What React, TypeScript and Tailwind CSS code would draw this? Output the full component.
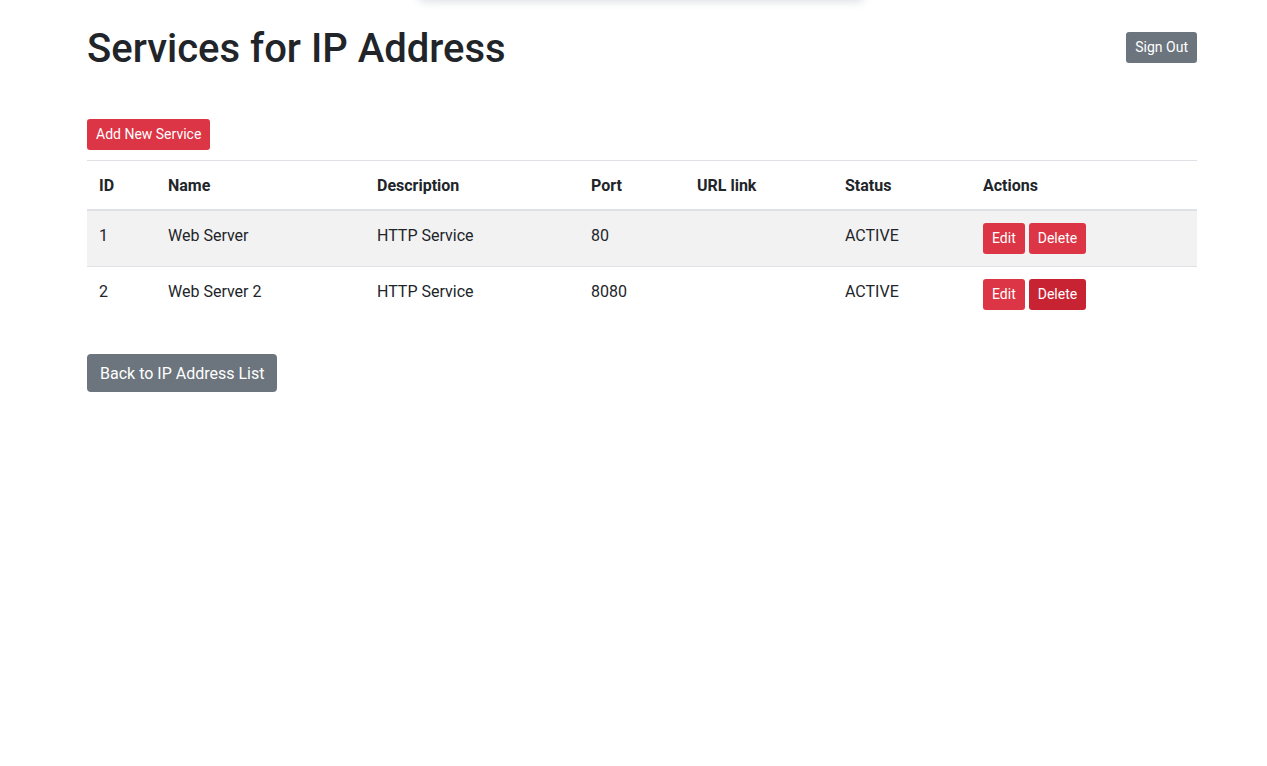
import React from 'react';

const SERVICES = [
  { id: 1, name: 'Web Server', description: 'HTTP Service', port: '80', url: '', status: 'ACTIVE' },
  { id: 2, name: 'Web Server 2', description: 'HTTP Service', port: '8080', url: '', status: 'ACTIVE' },
];

const COLS = [
  { label: 'ID', w: 'w-[69px]' },
  { label: 'Name', w: 'w-[209px]' },
  { label: 'Description', w: 'w-[214px]' },
  { label: 'Port', w: 'w-[106px]' },
  { label: 'URL link', w: 'w-[148px]' },
  { label: 'Status', w: 'w-[138px]' },
  { label: 'Actions', w: 'w-[226px]' },
];

const smBtn = 'h-[31px] px-[9px] rounded-[3px] text-white text-[14px] leading-[21px]';

export default function App() {
  return (
    <div className="relative min-h-[766px] bg-white text-[#212529] font-['Roboto',sans-serif] overflow-hidden">
      {/* toast peeking from top edge */}
      <div className="absolute left-[418px] top-[-40px] w-[447px] h-[40px] rounded-lg bg-white shadow-[0_2px_8px_rgba(40,60,90,0.16)]" />

      <div className="w-[1110px] ml-[87px] pt-[23px]">
        <div className="flex items-center justify-between">
          <h1 className="relative top-[2px] text-[40px] leading-[48px] font-medium">Services for IP Address</h1>
          <button className={`${smBtn} bg-[#6c757d]`}>Sign Out</button>
        </div>

        <div className="mt-[48px]">
          <button className={`${smBtn} bg-[#dc3545]`}>Add New Service</button>
        </div>

        <table className="mt-[10px] w-full border-collapse text-[16px] leading-6 text-left">
          <thead>
            <tr className="border-t border-[#dee2e6] border-b-2">
              {COLS.map((c) => (
                <th key={c.label} className={`${c.w} px-3 pt-[13px] pb-[11px] font-bold align-bottom`}>
                  {c.label}
                </th>
              ))}
            </tr>
          </thead>
          <tbody>
            {SERVICES.map((s, i) => (
              <tr key={s.id} className={i % 2 === 0 ? 'bg-[#f2f2f2] border-t border-[#dee2e6]' : 'border-t border-[#dee2e6]'}>
                <td className="px-3 pt-[13px] pb-[11px] align-top">{s.id}</td>
                <td className="px-3 pt-[13px] pb-[11px] align-top">{s.name}</td>
                <td className="px-3 pt-[13px] pb-[11px] align-top">{s.description}</td>
                <td className="px-3 pt-[13px] pb-[11px] align-top">{s.port}</td>
                <td className="px-3 pt-[13px] pb-[11px] align-top">{s.url}</td>
                <td className="px-3 pt-[13px] pb-[11px] align-top">{s.status}</td>
                <td className="p-3 align-top">
                  <div className="flex gap-1">
                    <button className={`${smBtn} bg-[#dc3545]`}>Edit</button>
                    <button className={`${smBtn} ${i === 1 ? 'bg-[#c82333]' : 'bg-[#dc3545]'}`}>Delete</button>
                  </div>
                </td>
              </tr>
            ))}
          </tbody>
        </table>

        <button className="mt-[32px] h-[38px] px-[13px] pt-[2px] rounded bg-[#6c757d] text-white text-[16px] leading-6">
          Back to IP Address List
        </button>
      </div>
    </div>
  );
}
